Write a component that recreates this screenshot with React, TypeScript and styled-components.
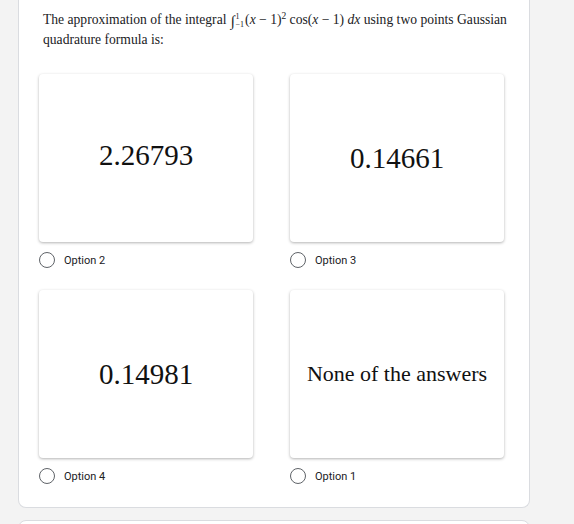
import React from "react";
import styled, { createGlobalStyle } from "styled-components";

const GlobalStyle = createGlobalStyle`
  html, body {
    margin: 0;
    padding: 0;
    background: #f3f3f3;
    height: 524px;
    overflow: hidden;
  }
`;

const Page = styled.div`
  width: 574px;
  padding-left: 18px;
  box-sizing: border-box;
`;

const Card = styled.div<{ $top?: boolean }>`
  width: 512px;
  box-sizing: border-box;
  background: #ffffff;
  border: 1px solid #dadce0;
  border-top: ${(p) => (p.$top ? "1px solid #dadce0" : "none")};
  border-radius: ${(p) => (p.$top ? "8px 8px 0 0" : "0 0 8px 8px")};
  padding: 10px 20px 23px 20px;
  margin-bottom: 12px;
  min-height: ${(p) => (p.$top ? "40px" : "auto")};
`;

const Question = styled.div`
  font-family: "Liberation Serif", "Times New Roman", serif;
  font-size: 13.6px;
  line-height: 20px;
  color: #202124;
  padding-left: 4px;
  width: 468px;
  box-sizing: border-box;
`;

const Italic = styled.i`
  font-family: "Liberation Serif", serif;
`;

const Integral = styled.span`
  display: inline-flex;
  align-items: center;
  height: 14px;
  vertical-align: -2px;
  margin: 0 1px 0 4px;
`;

const IntSign = styled.span`
  font-size: 15px;
  line-height: 14px;
`;

const Limits = styled.span`
  display: inline-flex;
  flex-direction: column;
  align-items: flex-start;
  font-size: 8px;
  line-height: 8px;
  margin-left: 1px;
`;

const Sup = styled.span`
  font-size: 9.5px;
  line-height: 0;
  vertical-align: 5px;
`;

const Grid = styled.div`
  display: grid;
  grid-template-columns: 214px 214px;
  column-gap: 37px;
  row-gap: 22px;
  margin-top: 24px;
`;

const Option = styled.div`
  display: flex;
  flex-direction: column;
`;

const ImageBox = styled.div<{ $shift?: number }>`
  height: 168px;
  background: #ffffff;
  border-radius: 4px;
  box-shadow: 0 1px 3px rgba(0, 0, 0, 0.3);
  display: flex;
  align-items: center;
  justify-content: center;
  padding-bottom: ${(p) => p.$shift ?? 0}px;
  box-sizing: border-box;
`;

const AnswerText = styled.div<{ $size: number }>`
  font-family: "Liberation Serif", "Times New Roman", serif;
  font-size: ${(p) => p.$size}px;
  color: #111111;
`;

const RadioRow = styled.label`
  display: flex;
  align-items: center;
  gap: 9px;
  margin-top: 10px;
  height: 16px;
  font-family: Roboto, "Liberation Sans", sans-serif;
  font-size: 11px;
  color: #202124;
`;

const Circle = styled.span`
  width: 16px;
  height: 16px;
  box-sizing: border-box;
  border: 1.5px solid #5f6368;
  border-radius: 50%;
`;

const options = [
  { text: "2.26793", label: "Option 2", size: 29, shift: 6 },
  { text: "0.14661", label: "Option 3", size: 29, shift: 0 },
  { text: "0.14981", label: "Option 4", size: 29, shift: 0 },
  { text: "None of the answers", label: "Option 1", size: 22, shift: 0 },
];

const App: React.FC = () => {
  return (
    <Page>
      <GlobalStyle />
      <Card>
        <Question>
          The approximation of the integral
          <Integral>
            <IntSign>∫</IntSign>
            <Limits>
              <span>1</span>
              <span>−1</span>
            </Limits>
          </Integral>
          (<Italic>x</Italic> − 1)<Sup>2</Sup> cos(<Italic>x</Italic> − 1){" "}
          <Italic>dx</Italic> using two points Gaussian quadrature formula is:
        </Question>
        <Grid>
          {options.map((o) => (
            <Option key={o.label}>
              <ImageBox $shift={o.shift}>
                <AnswerText $size={o.size}>{o.text}</AnswerText>
              </ImageBox>
              <RadioRow>
                <Circle />
                {o.label}
              </RadioRow>
            </Option>
          ))}
        </Grid>
      </Card>
      <Card $top />
    </Page>
  );
};

export default App;
